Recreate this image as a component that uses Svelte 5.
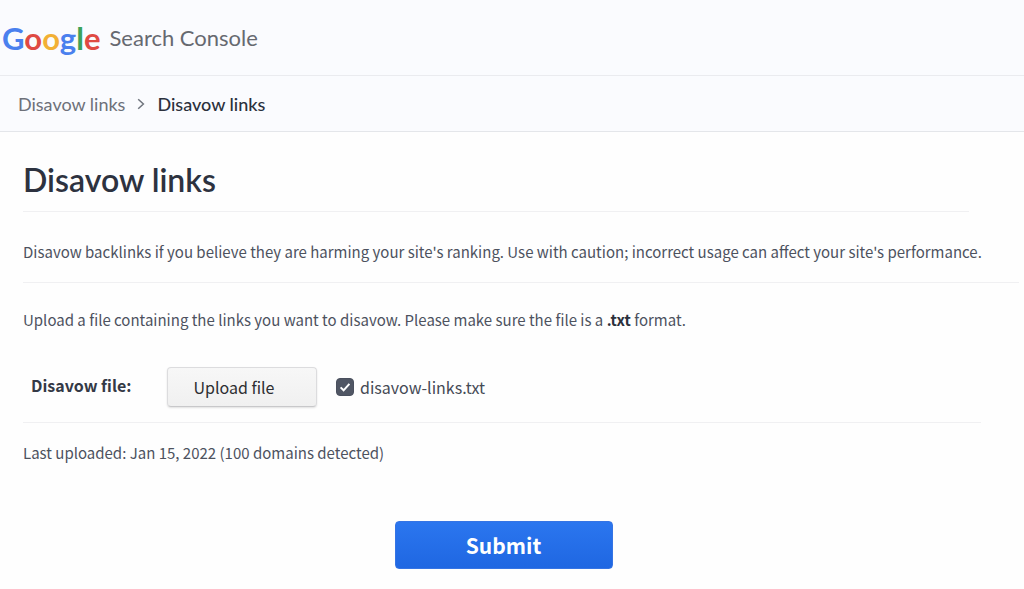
<script>
  const brand = [
    { letter: 'G', tone: 'blue' },
    { letter: 'o', tone: 'red' },
    { letter: 'o', tone: 'yellow' },
    { letter: 'g', tone: 'blue' },
    { letter: 'l', tone: 'green' },
    { letter: 'e', tone: 'red' },
  ];

  let included = $state(true);
</script>

<div class="page">
  <header class="top">
    <a class="home" href="#home">
      <span class="brand">{#each brand as part}<span class={part.tone}>{part.letter}</span>{/each}</span>
      <span class="product">Search Console</span>
    </a>
  </header>

  <nav class="crumbs" aria-label="Breadcrumb">
    <a href="#disavow">Disavow links</a>
    <svg width="8" height="12" viewBox="0 0 8 12" aria-hidden="true">
      <path d="M1.2 1.2 6.4 6 1.2 10.8" fill="none" stroke="#70757e" stroke-width="1.5" />
    </svg>
    <span class="current" aria-current="page">Disavow links</span>
  </nav>

  <main>
    <h1>Disavow links</h1>
    <p class="intro">
      Disavow backlinks if you believe they are harming your site's ranking. Use with caution; incorrect usage can affect your site's performance.
    </p>
    <p class="hint">
      Upload a file containing the links you want to disavow. Please make sure the file is a <strong>.txt</strong> format.
    </p>
    <div class="file-row">
      <span class="label" id="file-label">Disavow file:</span>
      <button class="upload" type="button" aria-describedby="file-label">Upload file</button>
      <label class="file">
        <input type="checkbox" bind:checked={included} />
        <span>disavow-links.txt</span>
      </label>
    </div>
    <p class="last">Last uploaded: Jan 15, 2022 (100 domains detected)</p>
    <div class="actions">
      <button class="submit" type="submit">Submit</button>
    </div>
  </main>
</div>

<style>
  :global(body) {
    margin: 0;
    background: #fefefe;
  }

  .page {
    font-family: 'Noto Sans CJK SC', 'Noto Sans', sans-serif;
    font-size: 15px;
    line-height: 24px;
    color: #4d525e;
  }

  .top {
    display: flex;
    align-items: center;
    height: 75px;
    background: #fafbfe;
    border-bottom: 1px solid #eaebef;
  }

  .home {
    display: flex;
    align-items: center;
    gap: 9px;
    padding-left: 2px;
    text-decoration: none;
    font-family: Lato, sans-serif;
    line-height: 40px;
  }

  .brand {
    font-size: 31px;
    font-weight: 700;
  }

  .blue { color: #4a80ee; }
  .red { color: #df4a43; }
  .yellow { color: #f2b035; }
  .green { color: #3ba35a; }

  .product {
    font-size: 22px;
    color: #666970;
  }

  .crumbs {
    display: flex;
    align-items: center;
    gap: 12px;
    height: 55px;
    padding: 0 18px;
    background: #fafbfe;
    border-bottom: 1px solid #e4e6ea;
    font-family: Lato, sans-serif;
    font-size: 18px;
  }

  .crumbs a {
    color: #6d7079;
    text-decoration: none;
  }

  .current {
    font-weight: 500;
    color: #2b303c;
  }

  main {
    display: flex;
    flex-direction: column;
    padding: 24px 5px 20px 23px;
  }

  h1 {
    margin: 0 50px 0 0;
    padding-bottom: 7px;
    border-bottom: 1px solid #f0f0f2;
    font-family: Lato, sans-serif;
    font-size: 32px;
    line-height: 48px;
    font-weight: 600;
    color: #2d323f;
  }

  p {
    margin: 0;
  }

  .intro {
    padding: 28px 0 18px;
    border-bottom: 1px solid #f0f0f2;
  }

  .hint {
    padding: 25px 0 23px;
  }

  strong {
    color: #2b303c;
  }

  .file-row {
    display: flex;
    align-items: center;
    margin-right: 38px;
    padding: 12px 0 15px 8px;
    border-bottom: 1px solid #f0f0f2;
    font-size: 16px;
  }

  .label {
    width: 136px;
    padding-bottom: 5px;
    font-weight: 600;
    color: #343946;
  }

  .upload {
    width: 150px;
    height: 40px;
    padding: 0 16px 0 0;
    border: 1px solid #dcdcde;
    border-bottom-color: #c8c8ca;
    border-radius: 4px;
    background: linear-gradient(#f7f7f7, #f0f0f0);
    box-shadow: 0 1px 2px rgb(0 0 0 / 12%);
    font: inherit;
    color: #2d2e31;
  }

  .file {
    display: flex;
    align-items: center;
    gap: 6px;
    margin-left: 19px;
    color: #454a55;
  }

  .file input {
    appearance: none;
    width: 18px;
    height: 18px;
    margin: 0;
    border: 1px solid #4a505e;
    border-radius: 4px;
    background: #fff;
  }

  .file input:checked {
    background: #505664 url("data:image/svg+xml,%3Csvg xmlns='http://www.w3.org/2000/svg' viewBox='0 0 16 16'%3E%3Cpath d='M3.6 8.4 6.6 11.3 12.4 4.9' fill='none' stroke='white' stroke-width='2'/%3E%3C/svg%3E") center / 16px no-repeat;
  }

  .last {
    padding: 18px 0 56px;
  }

  .actions {
    display: flex;
    justify-content: center;
    margin-right: 35px;
  }

  .submit {
    width: 218px;
    height: 48px;
    border: 1px solid #3574e4;
    border-radius: 4px;
    background: linear-gradient(#2b76ef, #1f67e2);
    font: inherit;
    font-size: 21px;
    font-weight: 600;
    color: #fff;
  }
</style>
